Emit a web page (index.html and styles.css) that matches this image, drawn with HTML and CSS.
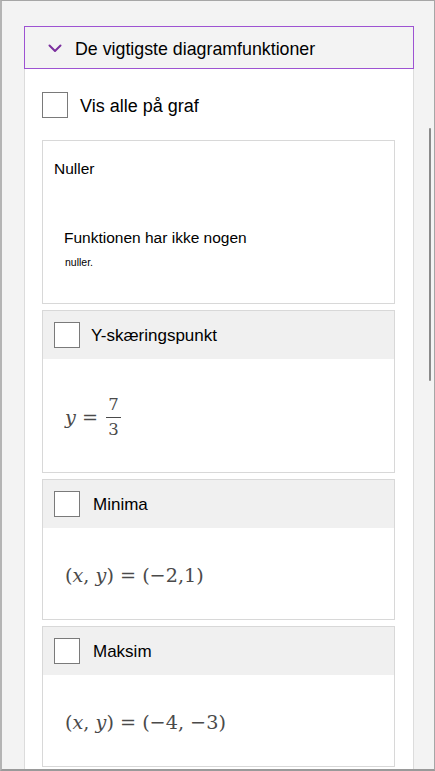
FILE: index.html
```html
<!DOCTYPE html>
<html lang="da">
<head>
<meta charset="utf-8">
<link rel="stylesheet" href="styles.css">
</head>
<body>
<div class="frame">
  <div class="column">
    <div class="header">
      <svg class="chev" width="14" height="9" viewBox="0 0 14 9"><path d="M1.5 1.5 L7 7 L12.5 1.5" fill="none" stroke="#7b2f9e" stroke-width="2" stroke-linecap="round" stroke-linejoin="round"/></svg>
      <span class="header-title">De vigtigste diagramfunktioner</span>
    </div>
    <div class="content">
      <div class="showall">
        <span class="box"></span>
        <span class="showall-label">Vis alle på graf</span>
      </div>
      <div class="card card-zero">
        <div class="zero-title">Nuller</div>
        <div class="zero-text">Funktionen har ikke nogen</div>
        <div class="zero-small">nuller.</div>
      </div>
      <div class="card card-tall">
        <div class="card-head"><span class="box"></span><span class="card-label">Y-skæringspunkt</span></div>
        <div class="card-body">
          <span class="math"><i>y</i> = </span>
          <span class="frac"><span class="num">7</span><span class="den">3</span></span>
        </div>
      </div>
      <div class="card card-short">
        <div class="card-head"><span class="box"></span><span class="card-label lbl2">Minima</span></div>
        <div class="card-body">
          <span class="math">(<i>x</i>, <i>y</i>) = (−2,1)</span>
        </div>
      </div>
      <div class="card card-short">
        <div class="card-head"><span class="box"></span><span class="card-label lbl2">Maksim</span></div>
        <div class="card-body">
          <span class="math">(<i>x</i>, <i>y</i>) = (−4, −3)</span>
        </div>
      </div>
    </div>
  </div>
  <div class="thumb"></div>
</div>
</body>
</html>
```
FILE: styles.css
```css
* { box-sizing: border-box; }
html, body { margin: 0; padding: 0; background: #ffffff; }
body { font-family: "Liberation Sans", Arial, sans-serif; color: #000; }

.frame {
  position: relative;
  width: 435px;
  height: 771px;
  border: 1px solid #a6a6a6;
  border-left: 2px solid #b4b4b4;
  border-bottom: 2px solid #9a9a9a;
  background: #f3f3f3;
  padding: 25px 0 0 22px;
  overflow: hidden;
}

.column {
  width: 390px;
  display: flex;
  flex-direction: column;
  height: 100%;
}

.header {
  height: 43px;
  border: 1.5px solid #9d52d2;
  background: #f3f3f3;
  display: flex;
  align-items: center;
  padding: 3px 0 0 23px;
}
.chev { margin-right: 13px; margin-top: -1px; }
.header-title { font-size: 17.8px; }

.content {
  flex: 1;
  background: #ffffff;
  border-left: 1px solid #dcdcdc;
  border-right: 1px solid #dcdcdc;
  padding: 23px 18px 0 17px;
  display: flex;
  flex-direction: column;
  gap: 6px;
}

.box {
  width: 26px;
  height: 26px;
  border: 1.5px solid #7a7a7a;
  background: #ffffff;
  flex: none;
}

.showall {
  display: flex;
  align-items: center;
  height: 26px;
  margin-bottom: 16px;
}
.showall-label { font-size: 18px; margin-left: 12px; padding-top: 2px; }

.card {
  border: 1px solid #d8d8d8;
  background: #ffffff;
  display: flex;
  flex-direction: column;
  flex: none;
}

.card-zero {
  height: 164px;
  padding: 18px 0 0 11px;
}
.zero-title { font-size: 15.5px; line-height: 20px; }
.zero-text { font-size: 15.5px; line-height: 20px; margin: 49px 0 0 10px; }
.zero-small { font-size: 10.5px; line-height: 14px; margin: 7px 0 0 11px; }

.card-head {
  height: 48px;
  background: #f0f0f0;
  display: flex;
  align-items: center;
  padding-left: 11px;
  flex: none;
}
.card-label { font-size: 17px; margin-left: 11px; padding-top: 1px; }
.lbl2 { margin-left: 13px; }

.card-tall { height: 163px; }
.card-short { height: 141px; }

.card-body {
  flex: 1;
  display: flex;
  align-items: center;
  padding-left: 22px;
  color: #4a4a4a;
  font-family: "DejaVu Serif", "Liberation Serif", serif;
}
.card-tall .card-body { padding-top: 3px; }
.card-short .card-body { padding-top: 3px; }

.math { font-size: 19.2px; white-space: pre; }
.math i { font-style: italic; }

.frac {
  display: inline-flex;
  flex-direction: column;
  align-items: center;
  font-size: 16.5px;
  line-height: 18px;
  margin-left: 2px;
}
.num { border-bottom: 1.5px solid #4a4a4a; padding: 0 2px 3px; }
.den { padding-top: 3px; }

.thumb {
  position: absolute;
  left: 427px;
  top: 127px;
  width: 2px;
  height: 253px;
  background: #8a8a8a;
  border-radius: 1px;
}
```
